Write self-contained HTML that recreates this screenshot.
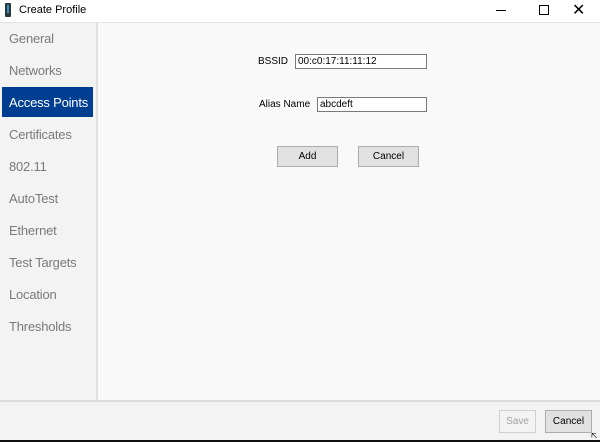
<!DOCTYPE html>
<html><head><style>
body{margin:0;width:600px;height:442px;overflow:hidden;background:#fff;font-family:"Liberation Sans",sans-serif;position:relative}
.a{position:absolute}
.nav{left:9px;font-size:13px;color:#7a7a7a;letter-spacing:-0.2px}
.lbl{font-size:10px;color:#000}
.in{background:#fff;border:1px solid #7a7a7a;font-size:10px;height:13px;line-height:13px;padding-left:2px;box-sizing:content-box}
.btn{background:#e1e1e1;border:1px solid #adadad;font-size:10px;text-align:center;box-sizing:border-box}
</style></head><body>
<div class="a" style="left:5px;top:3px;width:6px;height:14px;background:#2a3a3a;border-radius:1px"></div>
<div class="a" style="left:7px;top:5px;width:2px;height:8px;background:#3a8fd0"></div>
<div class="a" style="left:19px;top:4px;font-size:11px">Create Profile</div>
<div class="a" style="left:496px;top:10px;width:10px;height:1px;background:#000"></div>
<div class="a" style="left:539px;top:5px;width:8px;height:8px;border:1px solid #000"></div>
<div class="a" style="left:572px;top:0px;font-size:16px;font-weight:300">✕</div>
<div class="a" style="left:0;top:22px;width:600px;height:1px;background:#e5e5e5"></div>
<div class="a" style="left:0;top:23px;width:96px;height:377px;background:#f3f3f3;border-right:2px solid #e0e0e0"></div>
<div class="a" style="left:98px;top:23px;width:502px;height:377px;background:#f9f9f9"></div>
<div class="a nav" style="top:31px">General</div>
<div class="a nav" style="top:63px">Networks</div>
<div class="a" style="left:2px;top:87px;width:91px;height:30px;background:#003e92"></div>
<div class="a nav" style="top:95px;color:#fff">Access Points</div>
<div class="a nav" style="top:127px">Certificates</div>
<div class="a nav" style="top:159px">802.11</div>
<div class="a nav" style="top:191px">AutoTest</div>
<div class="a nav" style="top:223px">Ethernet</div>
<div class="a nav" style="top:255px">Test Targets</div>
<div class="a nav" style="top:287px">Location</div>
<div class="a nav" style="top:319px">Thresholds</div>
<div class="a lbl" style="left:258px;top:56px">BSSID</div>
<div class="a in" style="left:295px;top:54px;width:128px">00:c0:17:11:11:12</div>
<div class="a lbl" style="left:259px;top:99px">Alias Name</div>
<div class="a in" style="left:317px;top:97px;width:106px">abcdeft</div>
<div class="a btn" style="left:277px;top:146px;width:61px;height:21px;line-height:19px">Add</div>
<div class="a btn" style="left:358px;top:146px;width:61px;height:21px;line-height:19px">Cancel</div>
<div class="a" style="left:0;top:400px;width:600px;height:2px;background:#dcdcdc"></div>
<div class="a" style="left:0;top:402px;width:600px;height:38px;background:#f3f3f3"></div>
<div class="a btn" style="left:499px;top:410px;width:37px;height:23px;line-height:21px;background:#f3f3f3;border-color:#cfcfcf;color:#a0a0a0">Save</div>
<div class="a btn" style="left:545px;top:410px;width:47px;height:23px;line-height:21px">Cancel</div>
<div class="a" style="left:0;top:440px;width:600px;height:2px;background:#111"></div>
<div class="a" style="left:591px;top:432px;font-size:10px;line-height:10px">🡤</div>
</body></html>
